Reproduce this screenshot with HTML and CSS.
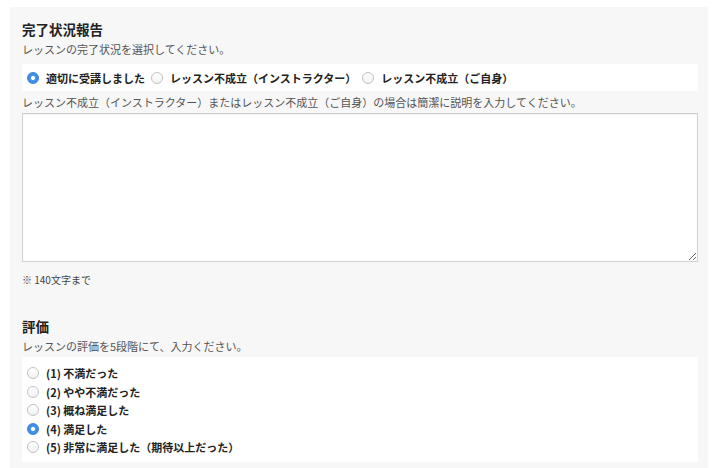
FILE: index.html
```html
<!DOCTYPE html>
<html>
<head lang="ja">
    <meta charset="UTF-8">
    <title>完了状況報告</title>
    <link rel="stylesheet" href="styles.css">
</head>
<body>
<div id="panel">
    <div class="section">
        <h2 class="title">完了状況報告</h2>
        <p class="note">レッスンの完了状況を選択してください。</p>
        <div class="choice_row">
            <label class="choice"><input type="radio" name="status" checked/><span>適切に受講しました</span></label>
            <label class="choice"><input type="radio" name="status"/><span>レッスン不成立（インストラクター）</span></label>
            <label class="choice"><input type="radio" name="status"/><span>レッスン不成立（ご自身）</span></label>
        </div>
        <p class="note note_mid">レッスン不成立（インストラクター）またはレッスン不成立（ご自身）の場合は簡潔に説明を入力してください。</p>
        <textarea class="memo"></textarea>
        <p class="limit">※ 140文字まで</p>
    </div>
    <div class="section section_rate">
        <h2 class="title">評価</h2>
        <p class="note">レッスンの評価を5段階にて、入力ください。</p>
        <div class="choice_list">
            <label class="choice"><input type="radio" name="rate"/><span>(1) 不満だった</span></label>
            <label class="choice"><input type="radio" name="rate"/><span>(2) やや不満だった</span></label>
            <label class="choice"><input type="radio" name="rate"/><span>(3) 概ね満足した</span></label>
            <label class="choice"><input type="radio" name="rate" checked/><span>(4) 満足した</span></label>
            <label class="choice"><input type="radio" name="rate"/><span>(5) 非常に満足した（期待以上だった）</span></label>
        </div>
    </div>
</div>
</body>
</html>
```

FILE: styles.css
```css
body,div,p,h2,label,textarea{ margin:0; padding:0;}
h2{ font-size:100%; font-weight:normal;}

body{
    background-color: #ffffff;
    font-family: "Noto Sans CJK JP", "Noto Sans", sans-serif;
    color: #333333;
}
#panel{
    width: 676px;
    margin: 7px 0 0 10px;
    padding: 12px 10px 10px 12px;
    background-color: #f7f7f7;
}
.title{
    font-size: 13.5px;
    line-height: 20px;
    font-weight: bold;
    color: #222222;
}
.note{
    margin-top: 2px;
    font-size: 11px;
    line-height: 16px;
    color: #555555;
}
.note_mid{
    margin-top: 3px;
}
.choice_row{
    display: flex;
    align-items: center;
    height: 27px;
    margin-top: 7px;
    padding-left: 5px;
    background-color: #ffffff;
}
.choice_row .choice{
    margin-right: 6px;
}
.choice{
    display: flex;
    align-items: center;
    font-size: 11px;
    font-weight: bold;
    color: #222222;
}
.choice input{
    appearance: none;
    -webkit-appearance: none;
    width: 12px;
    height: 12px;
    margin: 0 7px 0 0;
    border: 1px solid #c2c2c2;
    border-radius: 50%;
    background: linear-gradient(#ffffff, #f2f2f2);
    box-sizing: border-box;
}
.choice input:checked{
    border-color: #3a86e0;
    background: radial-gradient(circle, #ffffff 0, #ffffff 1.7px, #4a97ee 2.3px, #2f7de0 100%);
}
.memo{
    display: block;
    width: 676px;
    height: 149px;
    margin-top: 3px;
    border: 1px solid #d0d0d0;
    box-shadow: inset 0 1px 1px rgba(0,0,0,0.06);
    background-color: #ffffff;
    box-sizing: border-box;
    resize: vertical;
}
.limit{
    margin-top: 10px;
    font-size: 10px;
    line-height: 16px;
    color: #444444;
}
.section_rate{
    margin-top: 28px;
}
.choice_list{
    margin-top: 3px;
    padding: 7px 0 5px 5px;
    background-color: #ffffff;
}
.choice_list .choice{
    height: 18.5px;
}
```
